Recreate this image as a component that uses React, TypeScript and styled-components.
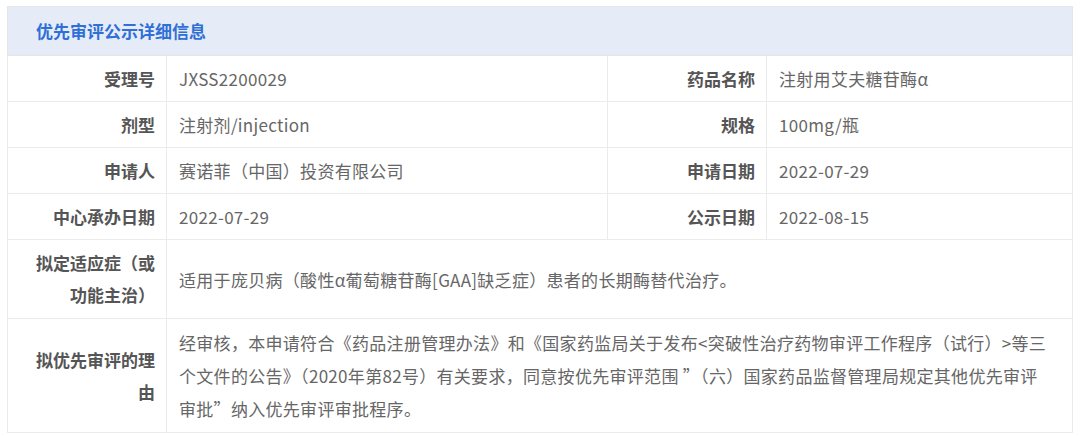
import React from 'react';
import styled, { createGlobalStyle } from 'styled-components';

const GlobalStyle = createGlobalStyle`
  body {
    margin: 0;
    background: #ffffff;
    font-family: 'Noto Sans CJK SC', 'Noto Sans', sans-serif;
  }
`;

const pairs: [string, string, string, string][] = [
  ['受理号', 'JXSS2200029', '药品名称', '注射用艾夫糖苷酶α'],
  ['剂型', '注射剂/injection', '规格', '100mg/瓶'],
  ['申请人', '赛诺菲（中国）投资有限公司', '申请日期', '2022-07-29'],
  ['中心承办日期', '2022-07-29', '公示日期', '2022-08-15'],
];

const App: React.FC = () => {
  return (
    <Page>
      <GlobalStyle />
      <Table>
        <colgroup>
          <col style={{ width: 159 }} />
          <col style={{ width: 441 }} />
          <col style={{ width: 159 }} />
          <col />
        </colgroup>
        <thead>
          <tr>
            <Title colSpan={4}>优先审评公示详细信息</Title>
          </tr>
        </thead>
        <tbody>
          {pairs.map((p) => (
            <Row key={p[0]}>
              <Label>{p[0]}</Label>
              <Value>{p[1]}</Value>
              <Label>{p[2]}</Label>
              <Value>{p[3]}</Value>
            </Row>
          ))}
          <Row tall>
            <Label>拟定适应症（或功能主治）</Label>
            <Value colSpan={3}>适用于庞贝病（酸性α葡萄糖苷酶[GAA]缺乏症）患者的长期酶替代治疗。</Value>
          </Row>
          <Row tall>
            <Label>拟优先审评的理由</Label>
            <Value colSpan={3}>
              经审核，本申请符合《药品注册管理办法》和《国家药监局关于发布&lt;突破性治疗药物审评工作程序（试行）&gt;等三个文件的公告》（2020年第82号）有关要求，同意按优先审评范围 ”（六）国家药品监督管理局规定其他优先审评审批”纳入优先审评审批程序。
            </Value>
          </Row>
        </tbody>
      </Table>
    </Page>
  );
};

export default App;

const Page = styled.div`
  padding: 6px 7px 0 7px;
  width: 1066px;
`;

const Table = styled.table`
  width: 1066px;
  border-collapse: collapse;
  table-layout: fixed;
  border: 1px solid #e6e6e6;
  font-size: 17px;
`;

const Title = styled.th`
  height: 46px;
  padding: 0 0 2px 28px;
  text-align: left;
  background: #e6ecf7;
  color: #2f6fd6;
  font-size: 17px;
  font-weight: 700;
  border: 1px solid #e6e6e6;
`;

const Row = styled.tr<{ tall?: boolean }>`
  height: ${(p) => (p.tall ? 'auto' : '46px')};

  & > td {
    padding-top: ${(p) => (p.tall ? '7px' : '0')};
    padding-bottom: ${(p) => (p.tall ? '7px' : '0')};
  }
`;

const Label = styled.td`
  padding-left: 20px;
  padding-right: 11px;
  text-align: right;
  font-weight: 700;
  color: #555;
  line-height: 32px;
  border: 1px solid #ebebeb;
  vertical-align: middle;
`;

const Value = styled.td`
  padding-left: 12px;
  padding-right: 20px;
  text-align: left;
  color: #666;
  letter-spacing: 0.3px;
  line-height: 33px;
  border: 1px solid #ebebeb;
  vertical-align: middle;
`;
